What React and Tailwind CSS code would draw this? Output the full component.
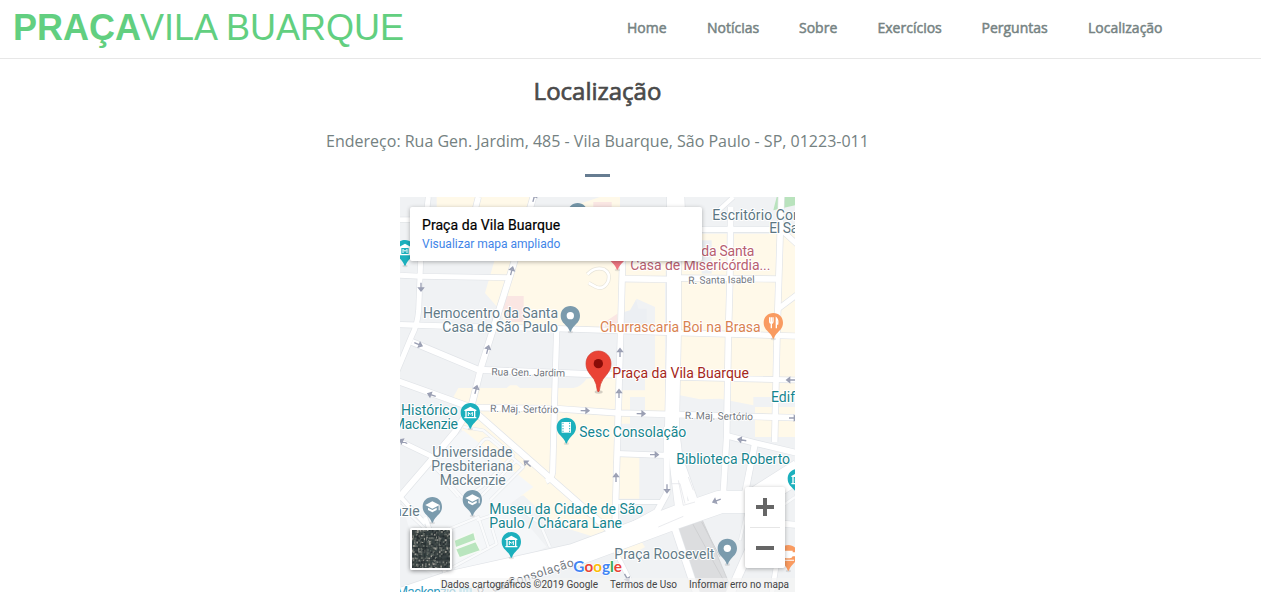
import React from "react";

const NAV = [
  ["Home", "w-[40px]", "mr-[40px]"],
  ["Notícias", "w-[52px]", "mr-[40px]"],
  ["Sobre", "w-[39px]", "mr-[39.5px]"],
  ["Exercícios", "w-[65px]", "mr-[39px]"],
  ["Perguntas", "w-[67px]", "mr-[39.5px]"],
  ["Localização", "w-[75px]", ""],
];

// Map drawing units: three per CSS pixel.
const ROADS = [
  ["M85 0L62 190L56 340Q52 385 36 415L-10 525", 15],
  ["M235 0L225 40", 16],
  ["M400 0L365 120L335 220L245 505L215 625L165 705L85 800L-5 905", 18],
  ["M0 68H40", 14],
  ["M0 235L62 238L328 242", 15],
  ["M0 383L130 387L470 395L655 401L820 407L1185 417", 16],
  ["M36 435L235 518L560 531L640 533", 18],
  ["M820 541L1185 549", 15],
  ["M-5 553L205 628L640 1010", 18],
  ["M225 632L470 635L655 648L800 652L1185 662", 17],
  ["M-5 730L95 778", 14],
  ["M470 400L464 600L458 825Q456 845 438 853", 16],
  ["M668 180L662 400L652 740L645 985", 17],
  ["M668 245L800 247L845 243L1135 246", 17],
  ["M795 775L652 770", 16],
  ["M650 915H785", 12],
  ["M905 97H1185", 16],
  ["M940 55L1000 0", 12],
  ["M992 30L990 240L985 420L980 720L970 890", 17],
  ["M1144 0L1138 190L1131 420L1124 735", 17],
  ["M1140 95L1195 145M1195 290L1135 335", 15],
  ["M975 715L1065 738L1200 770", 17],
  ["M1065 738L1035 890", 18],
  ["M800 690L800 890L770 945L650 1010", 18],
  ["M845 0L848 70", 16],
  ["M822 0L822 400L815 740", 42],
  ["M820 720L845 930", 40],
  ["M830 770L885 925", 26],
  ["M815 965L890 1190", 20],
  ["M1070 1010L990 1190", 26],
  ["M640 1050L690 1150", 12],
  ["M1130 1100L1115 1190", 14],
  ["M75 960L135 1125", 12],
  ["M0 898L75 980", 12],
  ["M1150 980L1200 985", 18],
];
const PATHS = [
  "M85 790L190 905L245 870L340 775L250 700L190 690",
  "M245 895L350 790M270 910L370 810L280 735Q260 715 245 735L205 790",
  "M130 850L175 900M0 925L90 1010M150 995L235 960L265 1050M230 970L350 930L420 980L450 1050",
  "M160 1110L290 1040L275 990M50 1185L160 1120",
  "M1050 900L1020 1030M1185 900L1100 960",
];
const ARROWS = [
  [63, 270, 90], [335, 222, -75], [263, 458, -75], [228, 578, -75], [55, 442, 22],
  [95, 594, 200], [10, 734, 205], [555, 641, 1], [723, 650, 1], [660, 467, -90],
  [657, 590, -90], [648, 842, -90], [382, 800, 220], [763, 773, 0], [801, 875, 90],
  [1172, 549, 180], [1180, 663, 0], [1026, 729, 190], [950, 911, 160], [402, 2, -75],
  [680, 1142, 60],
];

const LABELS = [
  ["Escritório Con", 937, 67, 265, "#5b7683"],
  ["El Sa", 1108, 108, 87, "#5b7683"],
  ["da Santa", 904, 177, 159, "#b8606f"],
  ["Casa de Misericórdia...", 691, 219, 420, "#b8606f"],
  ["Hemocentro da Santa", 69, 363, 405, "#637b88"],
  ["Casa de São Paulo", 127, 405, 347, "#637b88"],
  ["Churrascaria Boi na Brasa", 600, 405, 482, "#d98250"],
  ["Praça da Vila Buarque", 637, 543, 410, "#a52720"],
  ["Histórico", 3, 654, 170, "#16858e"],
  ["Mackenzie", -22, 696, 196, "#16858e"],
  ["Sesc Consolação", 538, 720, 321, "#16858e"],
  ["Edif", 1113, 615, 72, "#16858e"],
  ["Biblioteca Roberto", 829, 801, 341, "#16858e"],
  ["Universidade", 97, 780, 240, "#667c88"],
  ["Presbiteriana", 94, 822, 245, "#667c88"],
  ["Mackenzie", 119, 864, 198, "#667c88"],
  ["nzie", -18, 957, 77, "#667c88"],
  ["Museu da Cidade de São", 268, 949, 462, "#16858e"],
  ["Paulo / Chácara Lane", 268, 991, 398, "#16858e"],
  ["Praça Roosevelt", 643, 1084, 300, "#637b88"],
];
const STREETS = [
  ["R. Santa Isabel", 865, 261, 199, -1],
  ["Rua Gen. Jardim", 274, 535, 221, 1],
  ["R. Maj. Sertório", 270, 645, 205, 1],
  ["R. Maj. Sertório", 854, 666, 205, 1],
];

function Pin({ x, y, color, children }) {
  return (
    <g transform={`translate(${x} ${y})`}>
      <ellipse cx="0" cy="49" rx="8" ry="4" fill="#777" opacity=".2" />
      <path d="M0-29C-16-29-29-17-29 0C-29 18-17 24-9 34Q-4 40-2 47Q0 50 2 47Q4 40 9 34C17 24 29 18 29 0C29-17 16-29 0-29Z" fill={color} />
      {children}
    </g>
  );
}

function Museum() {
  return (
    <g fill="#fff">
      <path d="M-18-8L0-18L18-8V-5H-18ZM-15-5H-11V13H-15ZM11-5H15V13H11ZM-18 13H18V17H-18Z" />
      <path d="M-6 10V-1L0 5L6-1V10" fill="none" stroke="#fff" strokeWidth="3" />
    </g>
  );
}

function Grad() {
  return (
    <g fill="#fff">
      <path d="M-21-5L0-16L22-5L0 6ZM-13 3L0 10L13 3V10L0 17L-13 10Z" />
      <path d="M19-4H22V11H19Z" />
    </g>
  );
}

function MapDrawing() {
  return (
    <svg className="block h-full w-full" viewBox="0 0 1185 1185" style={{ fontFamily: "Roboto, sans-serif" }}>
      <rect width="1185" height="1185" fill="#f0f2f4" />
      <g fill="#fff9e9">
        <path d="M110 0H400V40H110ZM480 40L600 0H660V40ZM285 185H660V395H320L300 340L255 288Z" />
        <path d="M175 573H320L330 565H350L360 573H520Q545 568 560 545L650 540V985L600 1025L470 985L370 895L325 910L345 830L185 700L205 630L160 600Z" />
        <path d="M672 256H795V645H735V540H765V330L710 305L690 345L672 355Z" />
        <path d="M660 580H735V600H690V680H660ZM658 780H718V905H655ZM672 190H797V240H672ZM845 110H1185V600H1060V625L960 605L900 607L840 595ZM1065 630H1185V720H1065Z" />
        <path d="M640 1045L725 1035L735 1050L665 1090Z" />
      </g>
      <g fill="#eceff3">
        <path d="M905 130H935V230H905Z" />
        <path d="M672 345L690 340L708 308L715 335H740V390H672Z" />
      </g>
      <path d="M300 297H371V375H320ZM580 15H635V40H580ZM615 375L652 350V395H615Z" fill="#fae6e3" />
      <path d="M1130 0H1185V25L1120 40Z" fill="#b9e3bd" />
      <path d="M0 898L85 790L190 700L400 870L330 920L440 1050L160 1170L60 1110Z" fill="#f5f7f9" />

      <g fill="none" stroke="#e4e7ea" strokeWidth="10" strokeLinejoin="round">
        {PATHS.map((d) => <path key={d} d={d} />)}
      </g>
      <g fill="none" stroke="#fafbfc" strokeWidth="7" strokeLinejoin="round">
        {PATHS.map((d) => <path key={d} d={d} />)}
      </g>
      <path d="M830 990L905 965L925 1010L1000 1190H900Z" fill="#dcdddf" stroke="#c9cacc" strokeWidth="2" />
      <path d="M875 975L990 1185M905 975L960 1080" stroke="#cfd0d2" strokeWidth="3" />

      <g fill="none" stroke="#e1e4e8" strokeLinejoin="round">
        {ROADS.map(([d, w]) => <path key={d} d={d} strokeWidth={w + 4} />)}
        <path d="M-20 1215L150 1157L520 1075L830 960L960 915L1050 915L1200 820" strokeWidth="72" />
      </g>
      <g fill="none" stroke="#fff" strokeLinejoin="round">
        {ROADS.map(([d, w]) => <path key={d} d={d} strokeWidth={w} />)}
        <path d="M-20 1215L150 1157L520 1075L830 960L960 915L1050 915L1200 820" strokeWidth="68" />
      </g>
      <g fill="none" stroke="#dfe1e5" strokeWidth="2">
        <path d="M835 850L850 925L885 915M775 990L850 958M815 860L840 860L855 920M865 840L880 880" />
      </g>
      <path d="M562 232Q585 208 612 217Q632 228 625 252Q612 280 588 270L566 258" fill="none" stroke="#e7e4d9" strokeWidth="12" />
      <path d="M562 232Q585 208 612 217Q632 228 625 252Q612 280 588 270L566 258" fill="none" stroke="#fff" strokeWidth="8" />

      <g fill="#b9e5be" stroke="#f7faf7" strokeWidth="5">
        <path d="M162 1030L222 1005L228 1030L166 1053Z" />
        <path d="M166 1056L228 1033L242 1061L178 1083Z" />
      </g>
      <g fill="none" stroke="#9a9fb3" strokeWidth="4">
        {ARROWS.map(([x, y, r]) => (
          <path key={`${x}-${y}`} transform={`translate(${x} ${y}) rotate(${r})`} d="M-13 0H10M3-7L12 0L3 7Z" />
        ))}
      </g>

      <g fontSize="31" fill="#74797f" stroke="#fff" strokeWidth="5" strokeLinejoin="round" paintOrder="stroke">
        {STREETS.map(([t, x, y, w, r]) => (
          <text key={t + x} x={x} y={y} textLength={w} transform={`rotate(${r} ${x} ${y})`}>{t}</text>
        ))}
        <text x="236" y="1200" fontSize="36" textLength="302" transform="rotate(-18 236 1200)">R. da Consolação</text>
      </g>

      <Pin x="15" y="158" color="#1cb0bd"><Museum /></Pin>
      <Pin x="533" y="47" color="#7496a8" />
      <Pin x="652" y="170" color="#ee7581" />
      <Pin x="511" y="356" color="#7b9bad"><circle r="11" fill="#fff" /></Pin>
      <Pin x="1120" y="377" color="#f99b61">
        <path d="M-11-16V-5Q-11 2-6 2V17M-1-16V-5Q-1 2-6 2V-16M9 17V-14Q15-8 13 4H9" fill="none" stroke="#fff" strokeWidth="4" />
      </Pin>
      <Pin x="211" y="647" color="#1cb0bd"><Museum /></Pin>
      <Pin x="499" y="691" color="#1cb0bd">
        <rect x="-14" y="-16" width="28" height="32" fill="#fff" />
        <path d="M-10-14V16M10-14V16" stroke="#1cb0bd" strokeWidth="3" strokeDasharray="4 4" />
      </Pin>
      <Pin x="217" y="908" color="#7b9bad"><Grad /></Pin>
      <Pin x="97" y="929" color="#7b9bad"><Grad /></Pin>
      <Pin x="334" y="1034" color="#1cb0bd"><Museum /></Pin>
      <Pin x="982" y="1054" color="#7b9bad"><circle r="11" fill="#fff" /></Pin>
      <Pin x="1192" y="845" color="#1cb0bd"><Museum /></Pin>
      <Pin x="1165" y="1073" color="#f99b61">
        <path d="M-15-12H13V-7H20V5H13Q11 11 4 11H-6Q-15 10-15 2ZM-15 15H17V18H-15Z" fill="#fff" />
      </Pin>
      <g>
        <ellipse cx="596" cy="585" rx="12" ry="5" fill="#555" opacity=".25" />
        <path d="M595 462C573 462 558 479 558 500C558 521 571 532 582 547Q590 560 592 581Q595 588 598 581Q600 560 609 547C620 532 633 521 633 500C633 479 617 462 595 462Z" fill="#ea4335" stroke="#cf3b2f" strokeWidth="2" />
        <circle cx="595" cy="500" r="14" fill="#8a0c08" />
      </g>

      <g fontSize="42" stroke="#fff" strokeWidth="6" strokeLinejoin="round" paintOrder="stroke">
        {LABELS.map(([t, x, y, w, c]) => (
          <text key={t + x + y} x={x} y={y + 1} textLength={w} fill={c}>{t}</text>
        ))}
        <text x="-12" y="1200" textLength="180" fill="#329bc0">Mackenzie</text>
      </g>
      <path d="M178 1172H216V1190H178Z" fill="#8cd2e5" />
      <path d="M187 1176V1190M197 1178V1190M207 1176V1190" stroke="#fff" strokeWidth="3" />
      <g fontFamily="Lato, sans-serif" fontSize="48" fontWeight="700" stroke="#fff" strokeWidth="4" paintOrder="stroke">
        <text x="520" y="1124" textLength="146" lengthAdjust="spacingAndGlyphs">
          <tspan fill="#4285f4">G</tspan><tspan fill="#ea4335">o</tspan><tspan fill="#fbbc05">o</tspan><tspan fill="#4285f4">g</tspan><tspan fill="#34a853">l</tspan><tspan fill="#ea4335">e</tspan>
        </text>
      </g>
      <rect x="120" y="1143" width="1065" height="42" fill="#f5f5f5" opacity=".65" />
    </svg>
  );
}

const SHADES = ["#3b4344", "#565f5c", "#2c3535", "#7c807a", "#414a46", "#a09f97", "#344040", "#676d68", "#262d30"];

function Satellite() {
  const cells = [];
  for (let y = 0; y < 20; y++) {
    for (let x = 0; x < 19; x++) {
      const r = Math.abs(Math.sin(x * 127.1 + y * 311.7) * 43758.5453) % 1;
      cells.push(
        <rect key={`${x}-${y}`} x={x * 2 + r} y={y * 2 - r} width={1 + r * 1.4} height={2.6 - r} fill={SHADES[Math.floor(r * 997) % 9]} />
      );
    }
  }
  return (
    <svg className="block h-full w-full bg-[#3b4344]" viewBox="0 0 38 38">
      {cells}
      <path d="M0 18L38 16M14 0L12 38M26 0L27 38M0 7L38 6M0 30L38 29" stroke="#242c2e" strokeWidth="1" opacity=".6" />
    </svg>
  );
}

function Fit({ w, h, size, children, ...rest }) {
  return (
    <svg className="block" width={w} height={h} overflow="visible">
      <text x="0" y={size} textLength={w} fontSize={size} {...rest}>{children}</text>
    </svg>
  );
}

export default function App() {
  return (
    <div className="h-[611px] w-[1261px] overflow-hidden bg-white font-['Open_Sans',sans-serif]">
      <header className="flex h-[59px] justify-between border-b border-[#e7e7e7] pr-[98px] pl-[13px]">
        <div className="flex pt-[8px] font-['Liberation_Sans',sans-serif] text-[36px] leading-[40px] whitespace-nowrap text-[#62cf80]">
          <span className="w-[127px] font-bold">PRAÇA</span>
          <span>VILA BUARQUE</span>
        </div>
        <nav className="flex pt-[18px] text-[14px] leading-[20px] whitespace-nowrap text-[#768383] [-webkit-text-stroke:0.5px_#768383]">
          {NAV.map(([t, w, m]) => (
            <a key={t} className={`${w} ${m}`}>{t}</a>
          ))}
        </nav>
      </header>
      <main className="flex w-[1195px] flex-col items-center">
        <h1 className="mt-[16px] text-[24px] leading-[32px] text-[#4a4a4a] [-webkit-text-stroke:0.7px_#4a4a4a]">Localização</h1>
        <p className="mt-[22px] text-[16px] leading-[24px] whitespace-nowrap text-[#748181]">
          Endereço: Rua Gen. Jardim, 485 - Vila Buarque, São Paulo - SP, 01223-011
        </p>
        <div className="mt-[21px] h-[3px] w-[25px] bg-[#667c91]" />
        <section className="relative mt-[20px] h-[395px] w-[395px] overflow-hidden font-['Roboto',sans-serif]">
          <MapDrawing />
          <div className="absolute top-[10px] left-[10px] h-[54px] w-[292px] rounded-[2px] bg-white px-3 pt-[9px] whitespace-nowrap shadow-[0_1px_4px_rgba(0,0,0,0.3)]">
            <div className="text-[14px] leading-[18px] tracking-[0.06px] text-black [-webkit-text-stroke:0.2px_black]">Praça da Vila Buarque</div>
            <div className="pt-px text-[12px] leading-[19px] text-[#4285e8]">Visualizar mapa ampliado</div>
          </div>
          <div className="absolute top-[331px] left-[10px] h-[42px] w-[42px] rounded-[2px] border-2 border-white shadow-[0_1px_4px_rgba(0,0,0,0.45)]">
            <Satellite />
          </div>
          <div className="absolute top-[290px] left-[345px] flex h-[81px] w-[40px] flex-col items-center rounded-[2px] bg-white shadow-[0_1px_4px_rgba(0,0,0,0.3)]">
            <svg className="h-[40px] w-[40px]" viewBox="0 0 40 40"><path d="M11 20H29M20 11V29" stroke="#666" strokeWidth="4" /></svg>
            <div className="h-px w-[30px] bg-[#e6e6e6]" />
            <svg className="h-[40px] w-[40px]" viewBox="0 0 40 40"><path d="M11 20H29" stroke="#666" strokeWidth="4" /></svg>
          </div>
          <div className="absolute top-[381px] left-[41px] flex h-[14px] gap-3">
            <Fit w={157} h={14} size={10} fill="#444">Dados cartográficos ©2019 Google</Fit>
            <Fit w={67} h={14} size={10} fill="#444">Termos de Uso</Fit>
            <Fit w={100} h={14} size={10} fill="#444">Informar erro no mapa</Fit>
          </div>
        </section>
      </main>
    </div>
  );
}
